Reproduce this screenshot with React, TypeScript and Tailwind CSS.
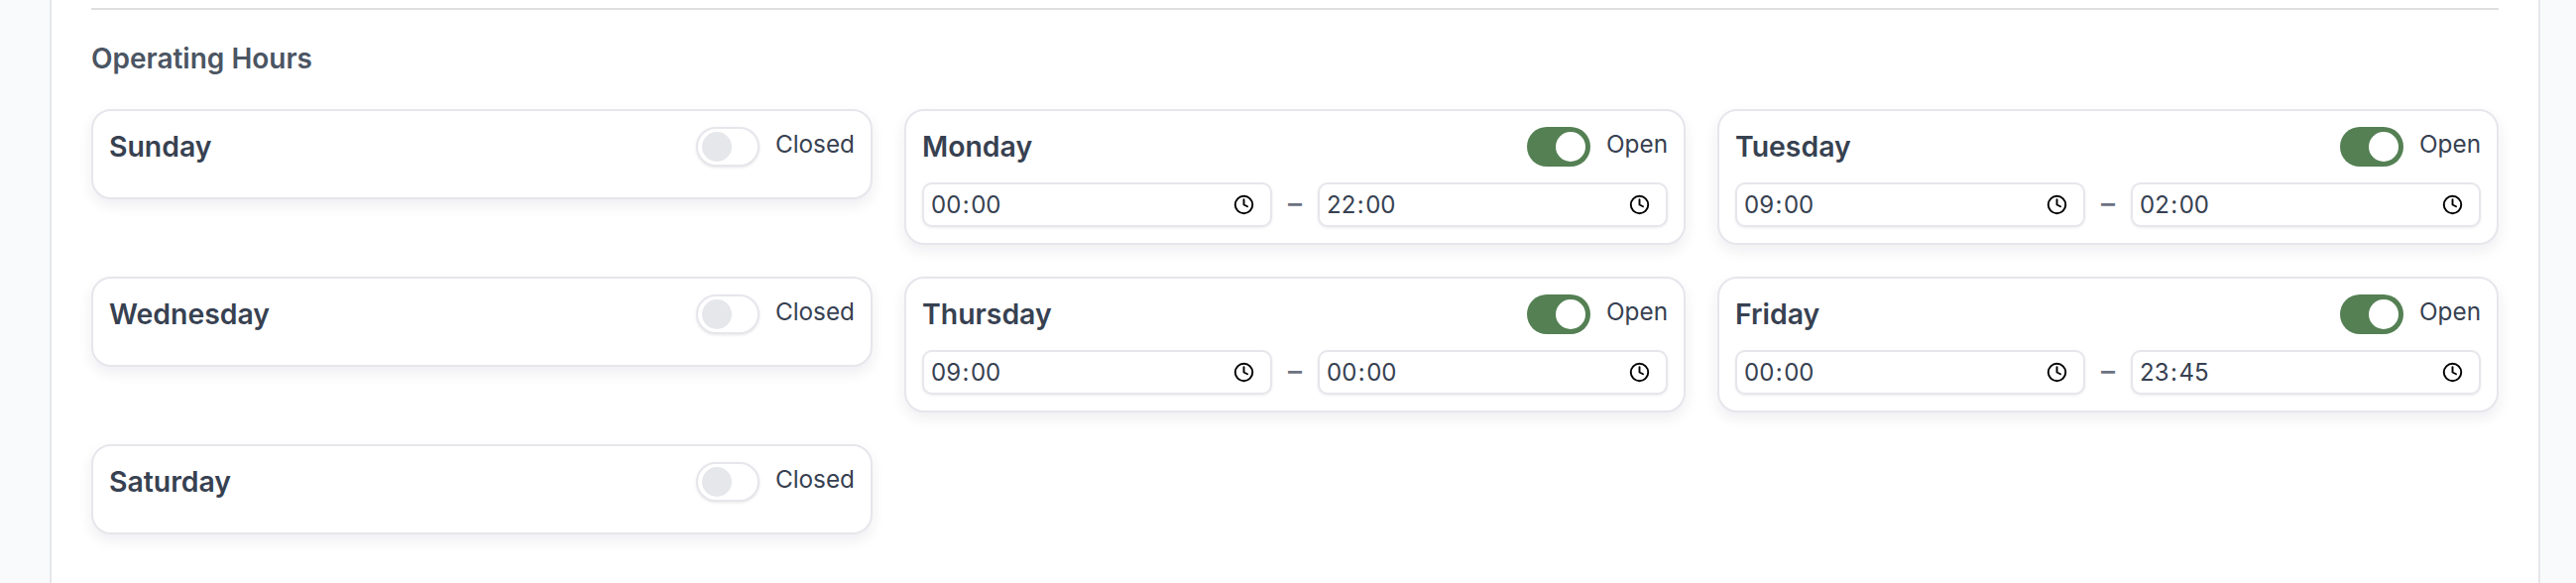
import { Clock } from "lucide-react";

type Day = { name: string; open: boolean; from?: string; to?: string };

const days: Day[] = [
  { name: "Sunday", open: false },
  { name: "Monday", open: true, from: "00:00", to: "22:00" },
  { name: "Tuesday", open: true, from: "09:00", to: "02:00" },
  { name: "Wednesday", open: false },
  { name: "Thursday", open: true, from: "09:00", to: "00:00" },
  { name: "Friday", open: true, from: "00:00", to: "23:45" },
  { name: "Saturday", open: false },
];

function TimeField({ value }: { value: string }) {
  const [h, m] = value.split(":");
  return (
    <div className="flex h-[45px] min-w-0 flex-1 items-center justify-between rounded-[10px] border-2 border-[#e6e6ec] bg-white pl-[7px] pr-[16px] text-[24px] leading-none text-[#374151] shadow-[0_1px_3px_rgba(0,0,0,0.08)]">
      <span className="flex items-center">
        <span>{h}</span>
        <span className="px-[1.5px]">:</span>
        <span>{m}</span>
      </span>
      <Clock className="h-[21px] w-[21px] text-black" strokeWidth={2.2} />
    </div>
  );
}

function Toggle({ open }: { open: boolean }) {
  return open ? (
    <div className="flex h-[40px] w-[64px] items-center justify-end rounded-full bg-[#548054] pr-[5px]">
      <div className="h-[30px] w-[30px] rounded-full bg-white" />
    </div>
  ) : (
    <div className="flex h-[40px] w-[64px] items-center justify-start rounded-full border-2 border-[#e6e6ec] bg-white pl-[4px] shadow-[0_1px_3px_rgba(0,0,0,0.1)]">
      <div className="h-[30px] w-[30px] rounded-full bg-[#e5e7eb]" />
    </div>
  );
}

function DayCard({ day }: { day: Day }) {
  return (
    <div className="min-h-[91px] rounded-[20px] border-2 border-[#e6e6ec] bg-white p-4 shadow-[0_6px_14px_rgba(40,40,80,0.08)]">
      <div className="flex h-[40px] items-center justify-between">
        <span className="text-[28.4px] font-semibold leading-none text-[#374151]">{day.name}</span>
        <div className="flex items-center gap-[16px]">
          <Toggle open={day.open} />
          <span className="relative -top-[2.5px] text-[24.3px] leading-none text-[#374151]">
            {day.open ? "Open" : "Closed"}
          </span>
        </div>
      </div>
      {day.open && day.from && day.to && (
        <div className="mt-4 flex items-center gap-[16px]">
          <TimeField value={day.from} />
          <span className="relative -top-[2px] text-[28px] font-medium leading-none text-[#6b7280]">–</span>
          <TimeField value={day.to} />
        </div>
      )}
    </div>
  );
}

export default function App() {
  return (
    <div className="flex h-[588px] overflow-hidden bg-[#f9fafb] pl-[50px] pr-[36px] font-['Inter',sans-serif]">
      <main className="flex-1 border-x-2 border-[#e6e6ec] bg-white px-[40px] pt-2">
        <div className="h-[2px] bg-[#dedede]" />
        <h2 className="mt-[31px] text-[28px] font-semibold leading-[36px] text-[#4b5563]">Operating Hours</h2>
        <div className="mt-[33px] grid grid-cols-3 items-start gap-x-[32px] gap-y-[32px]">
          {days.map((d) => (
            <DayCard key={d.name} day={d} />
          ))}
        </div>
      </main>
    </div>
  );
}
